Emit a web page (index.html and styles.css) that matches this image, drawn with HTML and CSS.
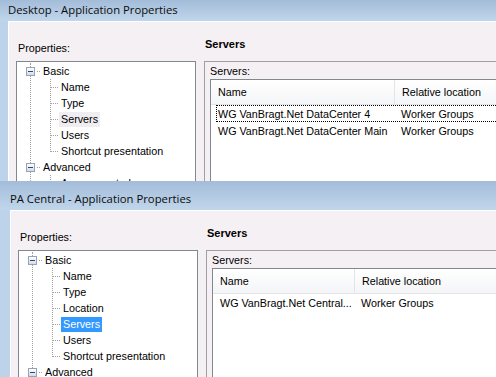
FILE: index.html
```html
<!DOCTYPE html>
<html lang="en">

<head>
  <meta charset="UTF-8" />
  <meta name="viewport" content="width=device-width, initial-scale=1.0" />
  <title>Application Properties</title>
  <link rel="stylesheet" href="styles.css">
</head>

<body>

  <!-- Jendela pertama: Desktop -->
  <div class="window desktop">
    <div class="titlebar">Desktop - Application Properties</div>
    <div class="frame">
      <div class="client">
        <div class="left-pane">
          <div class="label">Properties:</div>
          <div class="tree">
            <ul class="roots">
              <li>
                <div class="root-row"><span class="expander"></span><span class="hline"></span><span class="node-text">Basic</span></div>
                <ul class="children">
                  <li><span class="node-text">Name</span></li>
                  <li><span class="node-text">Type</span></li>
                  <li><span class="node-text inactive">Servers</span></li>
                  <li><span class="node-text">Users</span></li>
                  <li><span class="node-text">Shortcut presentation</span></li>
                </ul>
              </li>
              <li>
                <div class="root-row"><span class="expander"></span><span class="hline"></span><span class="node-text">Advanced</span></div>
                <ul class="children">
                  <li><span class="node-text">Access control</span></li>
                </ul>
              </li>
            </ul>
          </div>
        </div>

        <div class="right-pane">
          <div class="heading">Servers</div>
          <div class="group">
            <div class="label">Servers:</div>
            <div class="listview">
              <div class="lv-header">
                <div class="col name-col">Name</div>
                <div class="col">Relative location</div>
              </div>
              <div class="lv-row focused">
                <div class="cell name-cell">WG VanBragt.Net DataCenter 4</div>
                <div class="cell">Worker Groups</div>
              </div>
              <div class="lv-row">
                <div class="cell name-cell">WG VanBragt.Net DataCenter Main</div>
                <div class="cell">Worker Groups</div>
              </div>
            </div>
          </div>
        </div>
      </div>
    </div>
  </div>

  <!-- Jendela kedua: PA Central -->
  <div class="window central">
    <div class="titlebar">PA Central - Application Properties</div>
    <div class="frame">
      <div class="client">
        <div class="left-pane">
          <div class="label">Properties:</div>
          <div class="tree">
            <ul class="roots">
              <li>
                <div class="root-row"><span class="expander"></span><span class="hline"></span><span class="node-text">Basic</span></div>
                <ul class="children">
                  <li><span class="node-text">Name</span></li>
                  <li><span class="node-text">Type</span></li>
                  <li><span class="node-text">Location</span></li>
                  <li><span class="node-text selected">Servers</span></li>
                  <li><span class="node-text">Users</span></li>
                  <li><span class="node-text">Shortcut presentation</span></li>
                </ul>
              </li>
              <li>
                <div class="root-row"><span class="expander"></span><span class="hline"></span><span class="node-text">Advanced</span></div>
              </li>
            </ul>
          </div>
        </div>

        <div class="right-pane">
          <div class="heading">Servers</div>
          <div class="group">
            <div class="label">Servers:</div>
            <div class="listview">
              <div class="lv-header">
                <div class="col name-col">Name</div>
                <div class="col">Relative location</div>
              </div>
              <div class="lv-row">
                <div class="cell name-cell">WG VanBragt.Net Central...</div>
                <div class="cell">Worker Groups</div>
              </div>
            </div>
          </div>
        </div>
      </div>
    </div>
  </div>

</body>

</html>
```

FILE: styles.css
```css
/* Reset dan dasar */
* {
  margin: 0;
  padding: 0;
  box-sizing: border-box;
}

body {
  width: 496px;
  height: 377px;
  overflow: hidden;
  font-family: 'Liberation Sans', Arial, sans-serif;
  font-size: 10.75px;
  color: #000;
  background: #bdd3e9;
}

/* Jendela */
.window {
  width: 620px;
  display: flex;
  flex-direction: column;
  overflow: hidden;
  background: #bdd3e9;
}

.desktop {
  height: 181px;
  --name-col: 184px;
}

.central {
  height: 196px;
  --name-col: 142px;
}

.titlebar {
  flex-shrink: 0;
  font-family: 'Open Sans', 'Noto Sans', sans-serif;
  font-size: 11.3px;
  line-height: 16px;
  color: #0b0b0b;
  background: linear-gradient(to bottom, #a3bcd9, #c0d6eb);
}

.desktop .titlebar {
  height: 21px;
  padding: 2px 0 0 8px;
}

.central .titlebar {
  height: 29px;
  padding: 10px 0 0 10px;
}

.frame {
  flex: 1;
  display: flex;
  min-height: 0;
}

.desktop .frame {
  padding-left: 8px;
}

.central .frame {
  padding-left: 10px;
}

.client {
  flex: 1;
  display: flex;
  min-height: 0;
  background: #f5f0f4;
  border-left: 1px solid #fff;
  border-top: 1px solid #fff;
}

.label {
  line-height: 13px;
}

/* Panel kiri: tree */
.left-pane {
  width: 180px;
  margin-left: 7px;
  padding-top: 20px;
  display: flex;
  flex-direction: column;
}

.left-pane .label {
  margin: 0 0 6px 2px;
}

.tree {
  flex: 1;
  overflow: hidden;
  background: #fff;
  border: 1px solid #828790;
  border-bottom: none;
  padding-top: 1px;
}

.roots {
  list-style: none;
  margin: 8px 0 0 13px;
  border-left: 1px dotted #a0a0a0;
}

.roots > li:first-child {
  margin-top: -8px;
}

.root-row {
  display: flex;
  align-items: center;
  height: 16px;
}

.expander {
  width: 9px;
  height: 9px;
  margin-left: -5px;
  flex-shrink: 0;
  display: flex;
  align-items: center;
  justify-content: center;
  border: 1px solid #97a2b2;
  background: linear-gradient(to bottom, #fff, #d5dbe4);
}

.expander::before {
  content: '';
  width: 5px;
  height: 1px;
  background: #24468a;
}

.hline {
  width: 5px;
  height: 1px;
  margin-left: 1px;
  flex-shrink: 0;
  background: repeating-linear-gradient(to right, transparent 0 1px, #a0a0a0 1px 2px);
}

.children {
  list-style: none;
  margin-left: 19px;
}

.children li {
  display: flex;
  align-items: center;
  height: 16px;
  background: repeating-linear-gradient(to bottom, #a0a0a0 0 1px, transparent 1px 2px) no-repeat 0 0 / 1px 100%;
}

.children li:last-child {
  background-size: 1px 9px;
}

.children li::before {
  content: '';
  width: 8px;
  height: 1px;
  margin-left: 1px;
  flex-shrink: 0;
  background: repeating-linear-gradient(to right, #a0a0a0 0 1px, transparent 1px 2px);
}

.node-text {
  padding: 0 2px;
  line-height: 15px;
  white-space: nowrap;
}

.node-text.inactive {
  background: #efedf0;
}

.node-text.selected {
  background: #3399ff;
  color: #fff;
}

/* Panel kanan */
.right-pane {
  flex: 1;
  margin-left: 8px;
  padding-top: 15px;
  display: flex;
  flex-direction: column;
}

.heading {
  margin: 0 0 10px 1px;
  font-size: 11px;
  font-weight: bold;
  line-height: 14px;
}

.group {
  flex: 1;
  display: flex;
  flex-direction: column;
  padding: 3px 0 0 5px;
  border-top: 1px solid #a0a0a0;
  border-left: 1px solid #a0a0a0;
}

.group .label {
  margin-bottom: 1px;
}

.listview {
  flex: 1;
  background: #fff;
  border: 1px solid #828790;
  border-right: none;
  border-bottom: none;
}

.lv-header {
  display: flex;
  height: 25px;
  background: linear-gradient(to bottom, #fff, #f4f5f7);
  border-bottom: 1px solid #e3e4e7;
}

.lv-header .col {
  padding-left: 7px;
  line-height: 24px;
  white-space: nowrap;
}

.lv-header .name-col {
  width: var(--name-col);
  border-right: 1px solid #e3e4e7;
}

.lv-row {
  display: flex;
  align-items: center;
  height: 17px;
  margin-left: 5px;
  border: 1px dotted transparent;
}

.lv-row.focused {
  border-color: #000;
}

.lv-row .cell {
  white-space: nowrap;
  padding-left: 7px;
}

.lv-row .name-cell {
  width: calc(var(--name-col) - 7px);
  padding-left: 1px;
}
```
